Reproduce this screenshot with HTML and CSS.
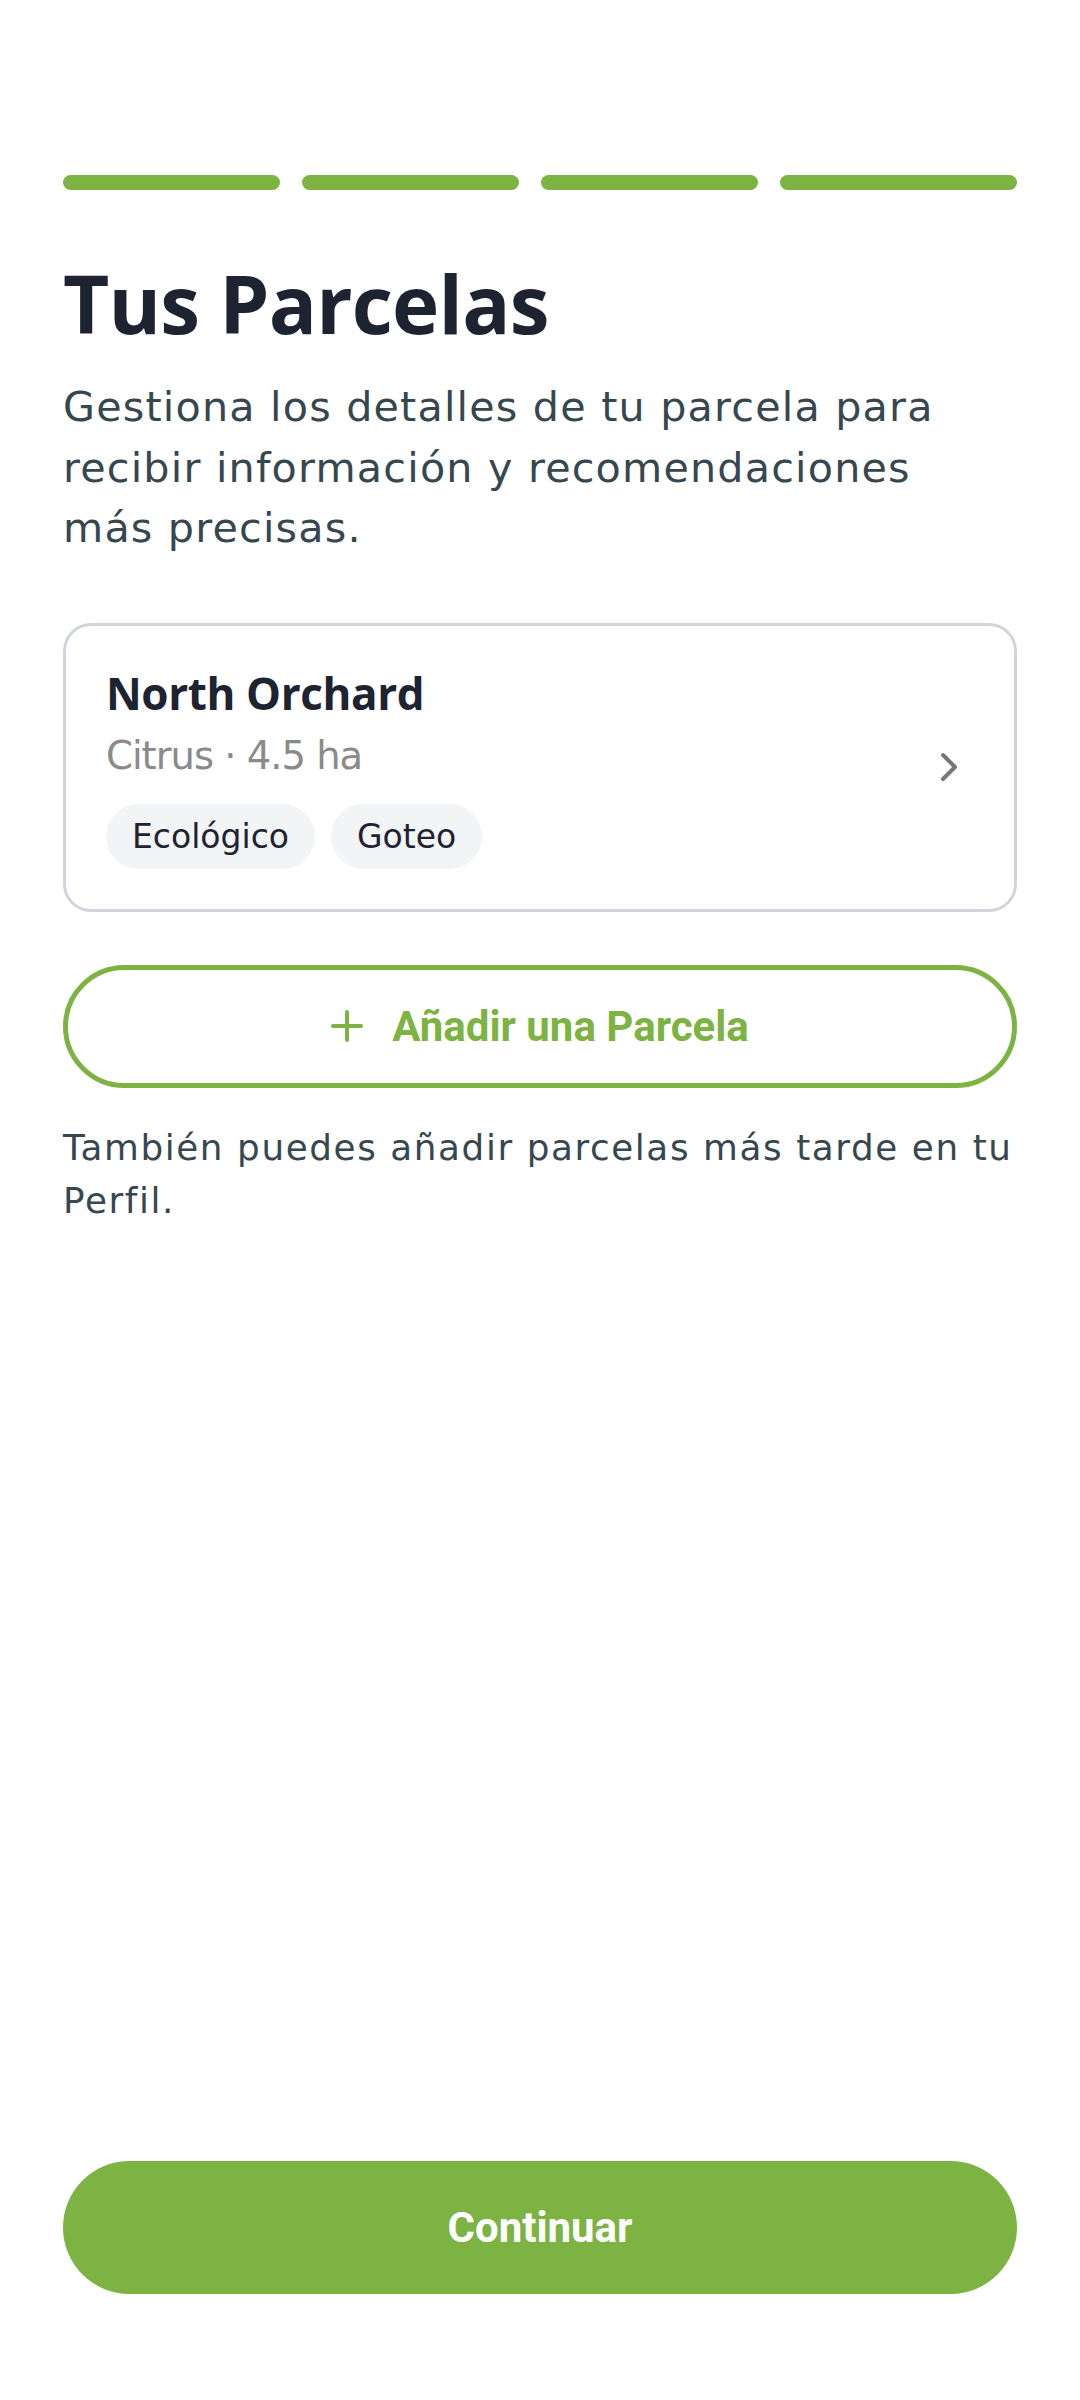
FILE: index.html
```html
<!DOCTYPE html>
<html lang="es">
<head>
<meta charset="utf-8">
<title>Tus Parcelas</title>
<link rel="stylesheet" href="styles.css">
</head>
<body>
<main class="screen">
  <div class="progress">
    <span class="step"></span>
    <span class="step"></span>
    <span class="step"></span>
    <span class="step step-last"></span>
  </div>

  <h1 class="title">Tus Parcelas</h1>
  <p class="subtitle">Gestiona los detalles de tu parcela para<br>recibir información y recomendaciones<br>más precisas.</p>

  <div class="card">
    <div class="card-body">
      <div class="card-name">North Orchard</div>
      <div class="card-meta">Citrus · 4.5 ha</div>
      <div class="chips">
        <span class="chip">Ecológico</span>
        <span class="chip">Goteo</span>
      </div>
    </div>
    <svg class="chevron" width="20" height="32" viewBox="0 0 20 32" aria-hidden="true">
      <polyline points="4,4 16,16 4,28" fill="none" stroke="#777777" stroke-width="4" stroke-linecap="round" stroke-linejoin="round"/>
    </svg>
  </div>

  <button class="btn-outline" type="button">
    <svg class="plus" width="32" height="32" viewBox="0 0 32 32" aria-hidden="true">
      <path d="M16 2 V30 M2 16 H30" fill="none" stroke="#7cb342" stroke-width="4" stroke-linecap="round"/>
    </svg>
    <span>Añadir una Parcela</span>
  </button>

  <p class="hint">También puedes añadir parcelas más tarde en tu<br>Perfil.</p>

  <button class="btn-primary" type="button">Continuar</button>
</main>
</body>
</html>
```

FILE: styles.css
```css
html, body {
  margin: 0;
  padding: 0;
  background: #ffffff;
}

.screen {
  box-sizing: border-box;
  width: 1080px;
  min-height: 2400px;
  padding: 175px 63px 106px;
  display: flex;
  flex-direction: column;
  font-family: "DejaVu Sans", "Noto Sans", sans-serif;
}

.progress {
  display: flex;
  gap: 22px;
  height: 15px;
}

.step {
  flex: 217 1 0;
  background: #7cb342;
  border-radius: 8px;
}

.step-last {
  flex-grow: 237;
}

.title {
  margin: 65px 0 0;
  font-family: "Open Sans", "Noto Sans", sans-serif;
  font-weight: 700;
  font-size: 80px;
  line-height: 96px;
  color: #1e2332;
  letter-spacing: -0.8px;
}

.subtitle {
  margin: 26px 0 0;
  font-size: 41.25px;
  line-height: 60.5px;
  letter-spacing: 1.2px;
  color: #37474f;
}

.card {
  margin-top: 64px;
  border: 3px solid #d1d5db;
  border-radius: 28px;
  padding: 39px 55px 40px 40px;
  display: flex;
  align-items: center;
  justify-content: space-between;
}

.card-name {
  font-family: "Open Sans", "Noto Sans", sans-serif;
  font-weight: 700;
  font-size: 44px;
  line-height: 56px;
  letter-spacing: -0.4px;
  color: #1e2332;
}

.card-meta {
  margin-top: 10px;
  font-size: 38.5px;
  line-height: 50px;
  letter-spacing: -1px;
  color: #8a8a8a;
}

.chips {
  margin-top: 23px;
  display: flex;
  gap: 16px;
}

.chip {
  height: 65px;
  line-height: 65px;
  padding: 0 26px;
  border-radius: 33px;
  background: #f3f4f6;
  font-size: 33px;
  color: #1e2332;
}

.chevron {
  flex: none;
  display: block;
}

.btn-outline {
  margin-top: 53px;
  height: 123px;
  border: 5px solid #7cb342;
  border-radius: 62px;
  background: #ffffff;
  display: flex;
  align-items: center;
  justify-content: center;
  gap: 29px;
  font-family: Roboto, "Liberation Sans", sans-serif;
  font-weight: 700;
  font-size: 42px;
  color: #7cb342;
  padding: 0;
}

.plus {
  display: block;
  flex: none;
}

.hint {
  margin: 33px 0 0;
  font-size: 35.75px;
  line-height: 53px;
  letter-spacing: 1.6px;
  color: #37474f;
}

.btn-primary {
  margin-top: auto;
  height: 133px;
  border: none;
  border-radius: 67px;
  background: #7cb342;
  color: #ffffff;
  font-family: Roboto, "Liberation Sans", sans-serif;
  font-weight: 700;
  font-size: 42px;
  padding: 0;
}
```
